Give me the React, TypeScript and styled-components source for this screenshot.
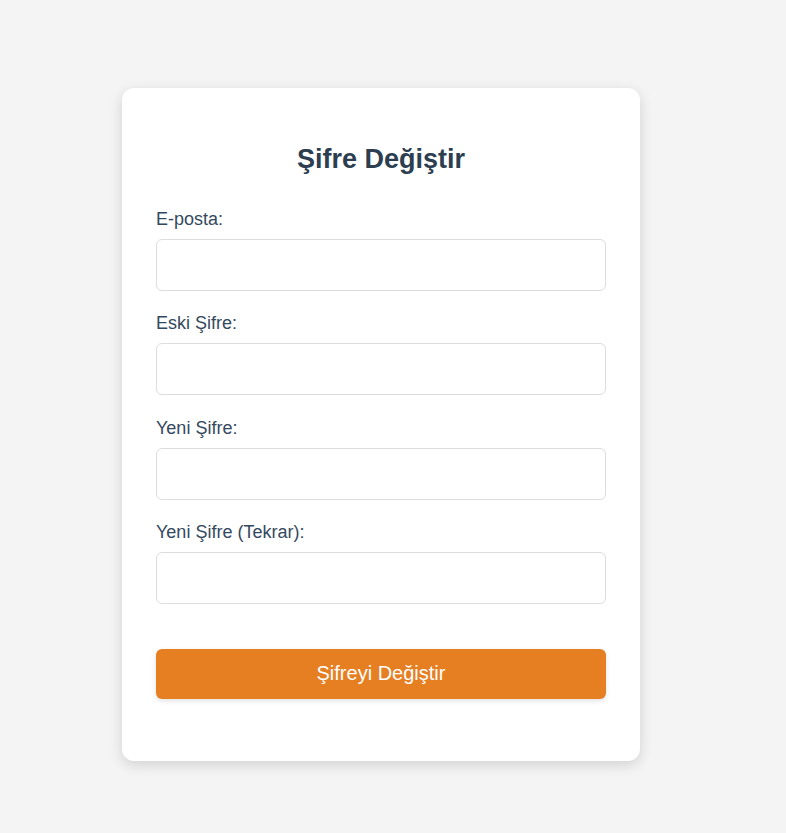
import React from "react";
import styled, { createGlobalStyle } from "styled-components";

const Global = createGlobalStyle`
  html, body { margin: 0; padding: 0; background: #f4f4f4; }
  body { font-family: "Liberation Sans", Arial, sans-serif; }
  * { box-sizing: border-box; }
`;

const Page = styled.div`
  display: flex;
  align-items: flex-start;
  padding: 88px 146px 72px 122px;
  min-height: 833px;
`;

const Card = styled.form`
  flex: 1;
  background: #ffffff;
  border-radius: 12px;
  box-shadow: 0 4px 14px rgba(0, 0, 0, 0.14);
  padding: 40px 34px 62px;
  display: flex;
  flex-direction: column;
`;

const Title = styled.h2`
  margin: 16px 0 34px;
  text-align: center;
  font-size: 27px;
  line-height: 31px;
  font-weight: 700;
  color: #2c3e50;
`;

const Group = styled.div`
  display: flex;
  flex-direction: column;
  margin-bottom: 22.4px;
`;

const Label = styled.label`
  display: block;
  font-size: 18px;
  line-height: 20px;
  color: #34495e;
  margin-bottom: 10px;
`;

const Input = styled.input`
  width: 100%;
  height: 52px;
  border: 1px solid #dddddd;
  border-radius: 6px;
  padding: 0 14px;
  font-size: 16px;
  font-family: inherit;
  background: #fff;
  outline: none;
`;

const Button = styled.button`
  margin-top: 22px;
  height: 50px;
  width: 100%;
  border: none;
  border-radius: 6px;
  background: #e67e22;
  color: #ffffff;
  font-family: inherit;
  font-size: 20px;
  box-shadow: 0 2px 5px rgba(0, 0, 0, 0.12);
  cursor: pointer;
`;

const fields = [
  { id: "email", label: "E-posta:", type: "email" },
  { id: "old", label: "Eski Şifre:", type: "password" },
  { id: "new", label: "Yeni Şifre:", type: "password" },
  { id: "new2", label: "Yeni Şifre (Tekrar):", type: "password" },
];

export default function App() {
  return (
    <>
      <Global />
      <Page>
        <Card onSubmit={(e) => e.preventDefault()}>
          <Title>Şifre Değiştir</Title>
          {fields.map((f) => (
            <Group key={f.id}>
              <Label htmlFor={f.id}>{f.label}</Label>
              <Input id={f.id} type={f.type} />
            </Group>
          ))}
          <Button type="submit">Şifreyi Değiştir</Button>
        </Card>
      </Page>
    </>
  );
}
